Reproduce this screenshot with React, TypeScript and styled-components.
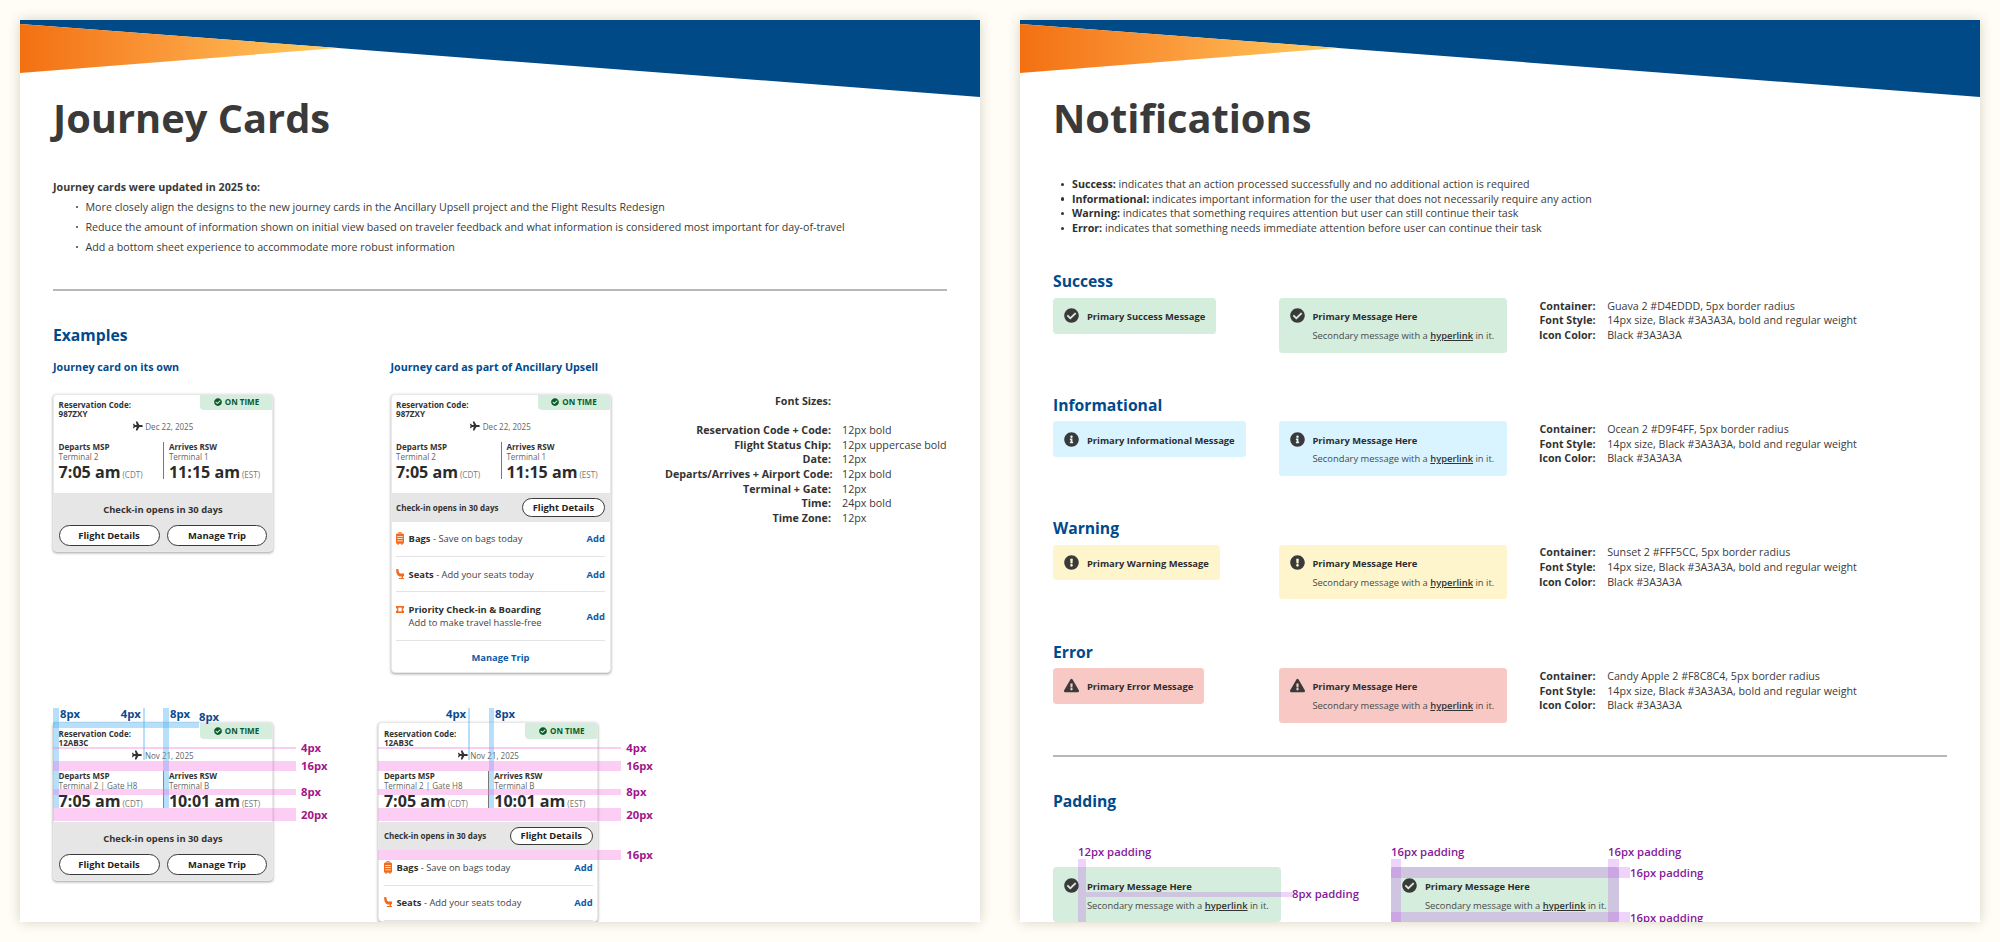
import React from "react";
import styled, { createGlobalStyle } from "styled-components";
import { FaPlane, FaCheckCircle, FaInfoCircle, FaExclamationCircle, FaExclamationTriangle } from "react-icons/fa";

const Global = createGlobalStyle`
  html, body { margin: 0; padding: 0; background: #fffdf6; height: 942px; overflow: hidden; }
  body { font-family: "Open Sans", "Noto Sans", sans-serif; color: #3a3a3a; -webkit-font-smoothing: antialiased; }
  * { box-sizing: border-box; }
`;

const Board = styled.main`
  display: flex;
  gap: 40px;
  padding: 20px;
  width: 2000px;
  height: 942px;
`;
const Sheet = styled.section`
  width: 960px;
  height: 902px;
  flex: none;
  overflow: hidden;
  background: #fff;
  box-shadow: 0 0 12px rgba(70, 55, 20, 0.22);
`;
const BannerSvg = styled.svg`
  display: block;
  width: 960px;
  height: 77px;
`;
const Content = styled.div`
  padding: 0 33px;
`;
const Title = styled.h1`
  margin: 0;
  font-size: 39.8px;
  line-height: 42px;
  font-weight: 700;
  color: #3a3a3a;
`;
const Intro = styled.p`
  margin: 38px 0 0;
  font-size: 10.68px;
  line-height: 20px;
  font-weight: 700;
`;
const LooseList = styled.ul`
  margin: 0;
  padding: 0 0 0 32.5px;
  font-size: 10.68px;
  line-height: 20px;
  list-style: none;
  li { position: relative; }
  li::before {
    content: "";
    position: absolute;
    left: -9.5px;
    top: 9px;
    width: 2.4px;
    height: 2.4px;
    border-radius: 50%;
    background: #3a3a3a;
  }
`;
const Rule = styled.hr<{ $top: number; $bottom: number }>`
  border: 0;
  height: 1.6px;
  background: #b8b8b8;
  margin: ${(p) => p.$top}px 0 ${(p) => p.$bottom}px;
`;
const SectionHeading = styled.h2`
  margin: 0;
  font-size: 15.7px;
  line-height: 22px;
  font-weight: 700;
  color: #004a8c;
`;
const ExampleRow = styled.div`
  display: flex;
  margin-top: 13px;
`;
const ExampleColumn = styled.div<{ $width: number }>`
  width: ${(p) => p.$width}px;
  flex: none;
`;
const SubHeading = styled.h3`
  margin: 0 0 19px;
  font-size: 10.72px;
  line-height: 16px;
  font-weight: 700;
  color: #004a8c;
`;
const SizeTable = styled.dl`
  display: grid;
  align-self: flex-start;
  grid-template-columns: 166px auto;
  column-gap: 11px;
  margin: 35px 0 0;
  font-size: 10.72px;
  line-height: 14.67px;
  white-space: nowrap;
  dt { font-weight: 700; text-align: right; color: #333; }
  dd { margin: 0; }
`;
const SizeSpacer = styled.div`
  grid-column: 1 / 3;
  height: 14.67px;
`;
const AnnotatedRow = styled.div`
  display: flex;
  gap: 105.3px;
  margin-top: 49.7px;
`;
const Annotated = styled.div`
  position: relative;
  width: 220px;
  flex: none;
`;

/* journey card */
const Card = styled.article`
  position: relative;
  width: 220px;
  border-radius: 4px;
  background: #fff;
  border: 1px solid #e9e9e9;
  box-shadow: 0 1px 3px rgba(0, 0, 0, 0.38);
  overflow: hidden;
`;
const StatusChip = styled.div`
  position: absolute;
  top: -1px;
  right: -1px;
  width: 73px;
  height: 16.5px;
  display: flex;
  align-items: center;
  justify-content: center;
  gap: 3px;
  background: #d4eddd;
  color: #0b5a2a;
  border-bottom-left-radius: 4px;
  font-size: 8.04px;
  font-weight: 700;
  svg { width: 8px; height: 8px; }
`;
const CardTop = styled.div`
  padding: 5.4px 4.6px 14px;
`;
const CodeBlock = styled.div`
  font-size: 8.04px;
  line-height: 9.4px;
  font-weight: 700;
  color: #333;
`;
const DateRow = styled.div`
  display: flex;
  justify-content: center;
  align-items: center;
  gap: 2.6px;
  margin-top: 2.6px;
  height: 10px;
  font-size: 8.04px;
  color: #666;
  svg { width: 10px; height: 10px; color: #333; }
`;
const Flights = styled.div`
  display: grid;
  grid-template-columns: 104.5px 1fr;
  margin-top: 10.6px;
`;
const Leg = styled.div`
  & + & {
    border-left: 1.3px solid #777;
    padding-left: 4.8px;
  }
`;
const LegName = styled.div`
  font-size: 8.04px;
  line-height: 9.4px;
  font-weight: 700;
  color: #333;
`;
const LegTerminal = styled.div`
  font-size: 8.04px;
  line-height: 11px;
  color: #666;
`;
const LegTime = styled.div`
  margin-top: 3.6px;
  font-size: 16.1px;
  line-height: 13px;
  font-weight: 700;
  color: #2b2b2b;
  white-space: nowrap;
`;
const Zone = styled.span`
  margin-left: 2px;
  font-size: 8.04px;
  line-height: 0;
  font-weight: 400;
  color: #777;
`;
const FooterStack = styled.div`
  background: #e6e6e6;
  padding: 10.5px 4.6px 5.6px;
`;
const FooterNote = styled.div`
  font-size: 9.38px;
  line-height: 13px;
  font-weight: 700;
  text-align: center;
  color: #333;
`;
const ButtonRow = styled.div`
  display: flex;
  gap: 7px;
  margin-top: 8.4px;
`;
const Pill = styled.button<{ $wide?: boolean; $h: number }>`
  ${(p) => (p.$wide ? "flex: 1;" : "width: 83px;")}
  height: ${(p) => p.$h}px;
  padding: 0;
  border: 1px solid #3a3a3a;
  border-radius: 11px;
  background: #fff;
  color: #222;
  font-family: inherit;
  font-size: 9.38px;
  font-weight: 700;
`;
const FooterBar = styled.div`
  display: flex;
  align-items: center;
  justify-content: space-between;
  background: #e6e6e6;
  padding: 5px 4.6px;
`;
const FooterBarNote = styled.div`
  font-size: 8.04px;
  font-weight: 700;
  color: #333;
`;
const Addons = styled.div`
  padding: 0 4.6px;
`;
const Addon = styled.div`
  display: flex;
  align-items: center;
  padding: 10.8px 0 10.5px;
  border-bottom: 1.3px solid #e3e3e3;
  font-size: 9.38px;
  line-height: 13px;
  color: #444;
`;
const AddonIcon = styled.svg<{ $drop?: number }>`
  width: 8px;
  margin: ${(p) => p.$drop ?? 0}px 4.5px 0 0;
  flex: none;
  fill: #f26a1b;
  align-self: flex-start;
`;
const AddonText = styled.div`
  flex: 1;
  strong { font-weight: 700; color: #2f2f2f; }
`;
const AddLink = styled.span`
  font-weight: 700;
  color: #0a5ca8;
`;
const ManageLink = styled.div`
  padding: 10.5px 0 7.5px;
  text-align: center;
  font-size: 9.38px;
  line-height: 13px;
  font-weight: 700;
  color: #0a5ca8;
`;

/* measure overlays */
const Band = styled.div<{ $x: number; $y: number; $w: number; $h: number; $tone: "blue" | "pink" | "violet" }>`
  position: absolute;
  left: ${(p) => p.$x}px;
  top: ${(p) => p.$y}px;
  width: ${(p) => p.$w}px;
  height: ${(p) => p.$h}px;
  background: ${(p) =>
    p.$tone === "blue" ? "rgba(90,185,245,.45)" : p.$tone === "pink" ? "rgba(250,120,225,.36)" : "rgba(190,70,235,.24)"};
`;
const Mark = styled.span<{ $x: number; $y: number; $tone: "blue" | "pink" | "violet" }>`
  position: absolute;
  left: ${(p) => p.$x}px;
  top: ${(p) => p.$y}px;
  font-size: 11.3px;
  line-height: 14px;
  font-weight: ${(p) => (p.$tone === "violet" ? 600 : 700)};
  white-space: nowrap;
  color: ${(p) => (p.$tone === "blue" ? "#0a4a8f" : p.$tone === "pink" ? "#a3158a" : "#86189a")};
`;

/* notifications */
const LooseBullets = styled.ul`
  margin: 38px 0 0;
  padding: 0 0 0 19px;
  font-size: 10.68px;
  line-height: 14.67px;
  list-style: none;
  li { position: relative; }
  li::before {
    content: "";
    position: absolute;
    left: -11.5px;
    top: 5.8px;
    width: 3.2px;
    height: 3.2px;
    border-radius: 50%;
    background: #333;
  }
  strong { font-weight: 700; color: #2f2f2f; }
`;
const NoticeSection = styled.div`
  height: 123.4px;
  &:first-of-type { margin-top: 34.7px; }
`;
const NoticeGrid = styled.div`
  display: grid;
  grid-template-columns: 225.5px 228px auto;
  margin-top: 5.6px;
  align-items: start;
`;
const Notice = styled.div<{ $bg: string; $wide?: boolean }>`
  display: flex;
  ${(p) => (p.$wide ? "width: 228px;" : "width: fit-content;")}
  gap: 7.7px;
  padding: 12.2px 11.2px 10.2px;
  border-radius: 3.5px;
  background: ${(p) => p.$bg};
  font-size: 9.38px;
  line-height: 13.3px;
  svg { width: 15px; height: 15px; color: #3a3a3a; flex: none; margin-top: -2px; }
`;
const NoticeBody = styled.div``;
const NoticePrimary = styled.div`
  font-weight: 700;
  color: #2d2d2d;
`;
const NoticeSecondary = styled.div`
  margin-top: 5.6px;
  color: #4a4a4a;
  white-space: nowrap;
  a { font-weight: 600; color: #333; text-decoration: underline; text-decoration-thickness: 0.5px; }
`;
const SpecTable = styled.dl`
  display: grid;
  grid-template-columns: 89px auto;
  column-gap: 11.7px;
  margin: 0.7px 0 0;
  font-size: 10.68px;
  line-height: 14.67px;
  white-space: nowrap;
  dt { font-weight: 700; text-align: right; color: #333; }
  dd { margin: 0; }
`;
const PaddingRow = styled.div`
  display: flex;
  gap: 110px;
  margin-top: 55px;
`;
const PaddingExample = styled.div`
  position: relative;
  width: 228px;
  flex: none;
`;

const Banner = () => (
  <BannerSvg viewBox="0 0 960 77" preserveAspectRatio="none">
    <defs>
      <linearGradient id="flame" x1="0" x2="1" y1="0" y2="0">
        <stop offset="0" stopColor="#f37011" />
        <stop offset="0.5" stopColor="#fb9c3d" />
        <stop offset="1" stopColor="#ffcd5f" />
      </linearGradient>
    </defs>
    <polygon points="0,0 960,0 960,77 318,28 0,4" fill="#004a87" />
    <polygon points="0,4 318,28 0,53" fill="url(#flame)" />
  </BannerSvg>
);

const BagIcon = () => (
  <AddonIcon viewBox="0 0 8 13" height="13">
    <path d="M2.5 0h3v1.6h1.2c.7 0 1.3.6 1.3 1.3v7.6c0 .7-.6 1.3-1.3 1.3H6.4V13H5.4v-1.2H2.6V13H1.6v-1.2H1.3C.6 11.8 0 11.2 0 10.5V2.9c0-.7.6-1.3 1.3-1.3h1.2V0zm.7.8v.8h1.6V.8H3.2z" />
    <path d="M1.2 4h5.6v.8H1.2zM1.2 6.2h5.6V7H1.2zM1.2 8.4h5.6v.8H1.2z" fill="#fff" />
  </AddonIcon>
);
const SeatIcon = () => (
  <AddonIcon viewBox="0 0 8 10" height="10" $drop={1}>
    <path d="M0 .2 2.4 0c.1 2.4.6 4 1.8 4.6H8v2.6H7V9h1v1H2.8V9h2.8V7.4H3.4C1.2 6.8.1 3.8 0 .2z" />
  </AddonIcon>
);
const PriorityIcon = () => (
  <AddonIcon viewBox="0 0 8 7" height="7" $drop={3}>
    <path d="M0 0h8v2.2c-.7 0-1.2.6-1.2 1.3S7.3 4.8 8 4.8V7H0V4.8c.7 0 1.2-.6 1.2-1.3S.7 2.2 0 2.2V0z" />
    <rect x="2.3" y="1.6" width="3.4" height="3.8" fill="#fff" />
  </AddonIcon>
);

type Journey = {
  code: string;
  date: string;
  departTerminal: string;
  departTime: string;
  arriveTerminal: string;
  arriveTime: string;
};
const dec: Journey = {
  code: "987ZXY",
  date: "Dec 22, 2025",
  departTerminal: "Terminal 2",
  departTime: "7:05 am",
  arriveTerminal: "Terminal 1",
  arriveTime: "11:15 am",
};
const nov: Journey = {
  code: "12AB3C",
  date: "Nov 21, 2025",
  departTerminal: "Terminal 2 | Gate H8",
  departTime: "7:05 am",
  arriveTerminal: "Terminal B",
  arriveTime: "10:01 am",
};

const CardHead = ({ j }: { j: Journey }) => (
  <CardTop>
    <StatusChip>
      <FaCheckCircle />
      ON TIME
    </StatusChip>
    <CodeBlock>
      Reservation Code:
      <br />
      {j.code}
    </CodeBlock>
    <DateRow>
      <FaPlane />
      {j.date}
    </DateRow>
    <Flights>
      <Leg>
        <LegName>Departs MSP</LegName>
        <LegTerminal>{j.departTerminal}</LegTerminal>
        <LegTime>
          {j.departTime}
          <Zone>(CDT)</Zone>
        </LegTime>
      </Leg>
      <Leg>
        <LegName>Arrives RSW</LegName>
        <LegTerminal>{j.arriveTerminal}</LegTerminal>
        <LegTime>
          {j.arriveTime}
          <Zone>(EST)</Zone>
        </LegTime>
      </Leg>
    </Flights>
  </CardTop>
);

const OwnCard = ({ j }: { j: Journey }) => (
  <Card>
    <CardHead j={j} />
    <FooterStack>
      <FooterNote>Check-in opens in 30 days</FooterNote>
      <ButtonRow>
        <Pill $wide $h={21}>Flight Details</Pill>
        <Pill $wide $h={21}>Manage Trip</Pill>
      </ButtonRow>
    </FooterStack>
  </Card>
);

const UpsellCard = ({ j, cropped }: { j: Journey; cropped?: boolean }) => (
  <Card>
    <CardHead j={j} />
    <FooterBar>
      <FooterBarNote>Check-in opens in 30 days</FooterBarNote>
      <Pill $h={18.7}>Flight Details</Pill>
    </FooterBar>
    <Addons>
      <Addon>
        <BagIcon />
        <AddonText>
          <strong>Bags</strong> - Save on bags today
        </AddonText>
        <AddLink>Add</AddLink>
      </Addon>
      <Addon>
        <SeatIcon />
        <AddonText>
          <strong>Seats</strong> - Add your seats today
        </AddonText>
        <AddLink>Add</AddLink>
      </Addon>
      {!cropped && (
        <>
          <Addon>
            <PriorityIcon />
            <AddonText>
              <strong>Priority Check-in &amp; Boarding</strong>
              <br />
              Add to make travel hassle-free
            </AddonText>
            <AddLink>Add</AddLink>
          </Addon>
          <ManageLink>Manage Trip</ManageLink>
        </>
      )}
    </Addons>
  </Card>
);

const VerticalGuides = ({ items }: { items: number[][] }) => (
  <>
    {items.map(([x, w, h]) => (
      <Band key={x} $x={x} $y={-14} $w={w} $h={h} $tone="blue" />
    ))}
  </>
);
const HorizontalGuides = () => (
  <>
    <Band $x={0} $y={24.3} $w={243} $h={2.7} $tone="pink" />
    <Band $x={0} $y={38.3} $w={243} $h={10.7} $tone="pink" />
    <Band $x={0} $y={67} $w={243} $h={5.3} $tone="pink" />
    <Band $x={0} $y={85.7} $w={243} $h={13.3} $tone="pink" />
    <Mark $x={248} $y={19} $tone="pink">4px</Mark>
    <Mark $x={248} $y={37} $tone="pink">16px</Mark>
    <Mark $x={248} $y={63} $tone="pink">8px</Mark>
    <Mark $x={248} $y={86} $tone="pink">20px</Mark>
  </>
);

const notices = [
  {
    name: "Success",
    bg: "#d5eddd",
    icon: <FaCheckCircle />,
    primary: "Primary Success Message",
    container: "Guava 2 #D4EDDD, 5px border radius",
  },
  {
    name: "Informational",
    bg: "#d9f4ff",
    icon: <FaInfoCircle />,
    primary: "Primary Informational Message",
    container: "Ocean 2 #D9F4FF, 5px border radius",
  },
  {
    name: "Warning",
    bg: "#fff5cc",
    icon: <FaExclamationCircle />,
    primary: "Primary Warning Message",
    container: "Sunset 2 #FFF5CC, 5px border radius",
  },
  {
    name: "Error",
    bg: "#f8c8c4",
    icon: <FaExclamationTriangle />,
    primary: "Primary Error Message",
    container: "Candy Apple 2 #F8C8C4, 5px border radius",
  },
];

const TwoLineNotice = ({ bg, icon }: { bg: string; icon: React.ReactNode }) => (
  <Notice $bg={bg} $wide>
    {icon}
    <NoticeBody>
      <NoticePrimary>Primary Message Here</NoticePrimary>
      <NoticeSecondary>
        Secondary message with a <a>hyperlink</a> in it.
      </NoticeSecondary>
    </NoticeBody>
  </Notice>
);

export default function App() {
  return (
    <>
      <Global />
      <Board>
        <Sheet>
          <Banner />
          <Content>
            <Title>Journey Cards</Title>
            <Intro>Journey cards were updated in 2025 to:</Intro>
            <LooseList>
              <li>More closely align the designs to the new journey cards in the Ancillary Upsell project and the Flight Results Redesign</li>
              <li>Reduce the amount of information shown on initial view based on traveler feedback and what information is considered most important for day-of-travel</li>
              <li>Add a bottom sheet experience to accommodate more robust information</li>
            </LooseList>
            <Rule $top={32} $bottom={33} />
            <SectionHeading>Examples</SectionHeading>
            <ExampleRow>
              <ExampleColumn $width={337.5}>
                <SubHeading>Journey card on its own</SubHeading>
                <OwnCard j={dec} />
              </ExampleColumn>
              <ExampleColumn $width={274.5}>
                <SubHeading>Journey card as part of Ancillary Upsell</SubHeading>
                <UpsellCard j={dec} />
              </ExampleColumn>
              <SizeTable>
                <dt>Font Sizes:</dt>
                <dd />
                <SizeSpacer />
                <dt>Reservation Code + Code:</dt>
                <dd>12px bold</dd>
                <dt>Flight Status Chip:</dt>
                <dd>12px uppercase bold</dd>
                <dt>Date:</dt>
                <dd>12px</dd>
                <dt>Departs/Arrives + Airport Code:</dt>
                <dd>12px bold</dd>
                <dt>Terminal + Gate:</dt>
                <dd>12px</dd>
                <dt>Time:</dt>
                <dd>24px bold</dd>
                <dt>Time Zone:</dt>
                <dd>12px</dd>
              </SizeTable>
            </ExampleRow>
            <AnnotatedRow>
              <Annotated>
                <OwnCard j={nov} />
                <VerticalGuides items={[[0, 5.6, 100], [90, 2.3, 52], [110.3, 5.4, 100]]} />
                <Band $x={0} $y={0} $w={146} $h={5.3} $tone="blue" />
                <HorizontalGuides />
                <Mark $x={7} $y={-15} $tone="blue">8px</Mark>
                <Mark $x={67.7} $y={-15} $tone="blue">4px</Mark>
                <Mark $x={117} $y={-15} $tone="blue">8px</Mark>
                <Mark $x={146} $y={-12} $tone="blue">8px</Mark>
              </Annotated>
              <Annotated>
                <UpsellCard j={nov} cropped />
                <VerticalGuides items={[[89.7, 2.3, 52], [110.7, 5.3, 100]]} />
                <HorizontalGuides />
                <Band $x={0} $y={127.7} $w={243} $h={10.3} $tone="pink" />
                <Mark $x={248} $y={126} $tone="pink">16px</Mark>
                <Mark $x={67.7} $y={-15} $tone="blue">4px</Mark>
                <Mark $x={116.7} $y={-15} $tone="blue">8px</Mark>
              </Annotated>
            </AnnotatedRow>
          </Content>
        </Sheet>
        <Sheet>
          <Banner />
          <Content>
            <Title>Notifications</Title>
            <LooseBullets>
              <li><strong>Success:</strong> indicates that an action processed successfully and no additional action is required</li>
              <li><strong>Informational:</strong> indicates important information for the user that does not necessarily require any action</li>
              <li><strong>Warning:</strong> indicates that something requires attention but user can still continue their task</li>
              <li><strong>Error:</strong> indicates that something needs immediate attention before user can continue their task</li>
            </LooseBullets>
            {notices.map((n) => (
              <NoticeSection key={n.name}>
                <SectionHeading>{n.name}</SectionHeading>
                <NoticeGrid>
                  <Notice $bg={n.bg}>
                    {n.icon}
                    <NoticePrimary>{n.primary}</NoticePrimary>
                  </Notice>
                  <TwoLineNotice bg={n.bg} icon={n.icon} />
                  <SpecTable>
                    <dt>Container:</dt>
                    <dd>{n.container}</dd>
                    <dt>Font Style:</dt>
                    <dd>14px size, Black #3A3A3A, bold and regular weight</dd>
                    <dt>Icon Color:</dt>
                    <dd>Black #3A3A3A</dd>
                  </SpecTable>
                </NoticeGrid>
              </NoticeSection>
            ))}
            <Rule $top={-8.6} $bottom={33.5} />
            <SectionHeading>Padding</SectionHeading>
            <PaddingRow>
              <PaddingExample>
                <TwoLineNotice bg="#d5eddd" icon={<FaCheckCircle />} />
                <Band $x={25} $y={-8} $w={8} $h={70} $tone="violet" />
                <Band $x={33} $y={24.4} $w={205.6} $h={5.6} $tone="violet" />
                <Mark $x={25} $y={-22} $tone="violet">12px padding</Mark>
                <Mark $x={239} $y={20} $tone="violet">8px padding</Mark>
              </PaddingExample>
              <PaddingExample>
                <TwoLineNotice bg="#d5eddd" icon={<FaCheckCircle />} />
                <Band $x={0} $y={-8} $w={10} $h={70} $tone="violet" />
                <Band $x={217} $y={-8} $w={10.6} $h={70} $tone="violet" />
                <Band $x={0} $y={0} $w={239} $h={10.7} $tone="violet" />
                <Band $x={0} $y={44.7} $w={239} $h={10.7} $tone="violet" />
                <Mark $x={0} $y={-22} $tone="violet">16px padding</Mark>
                <Mark $x={217} $y={-22} $tone="violet">16px padding</Mark>
                <Mark $x={239} $y={-1} $tone="violet">16px padding</Mark>
                <Mark $x={239} $y={43.4} $tone="violet">16px padding</Mark>
              </PaddingExample>
            </PaddingRow>
          </Content>
        </Sheet>
      </Board>
    </>
  );
}
